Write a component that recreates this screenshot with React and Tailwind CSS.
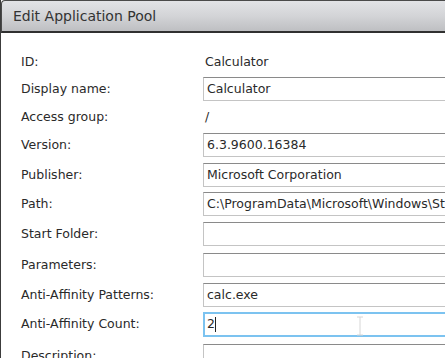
import React from 'react';

const rows = [
  { label: 'ID:', kind: 'text', value: 'Calculator', mt: 'mt-0' },
  { label: 'Display name:', kind: 'input', value: 'Calculator', mt: 'mt-[4px]' },
  { label: 'Access group:', kind: 'text', value: '/', mt: 'mt-[5px]' },
  { label: 'Version:', kind: 'input', value: '6.3.9600.16384', mt: 'mt-[5px]' },
  { label: 'Publisher:', kind: 'input', value: 'Microsoft Corporation', mt: 'mt-[6px]' },
  { label: 'Path:', kind: 'input', value: 'C:\\ProgramData\\Microsoft\\Windows\\Start Menu\\Programs', mt: 'mt-[5px]' },
  { label: 'Start Folder:', kind: 'input', value: '', mt: 'mt-[6px]' },
  { label: 'Parameters:', kind: 'input', value: '', mt: 'mt-[7px]' },
  { label: 'Anti-Affinity Patterns:', kind: 'input', value: 'calc.exe', mt: 'mt-[6px]' },
  { label: 'Anti-Affinity Count:', kind: 'focus', value: '2', mt: 'mt-[5px]' },
  { label: 'Description:', kind: 'input', value: '', mt: 'mt-[7px]' },
];

const Field = ({ row }) => {
  if (row.kind === 'text') {
    return <div className="h-[22px] flex items-center pl-[2px] whitespace-nowrap">{row.value}</div>;
  }
  if (row.kind === 'focus') {
    return (
      <div className="relative h-[25px] w-[300px] shrink-0 border-2 border-[#7cc3f0] bg-white flex items-center pl-[2px] whitespace-nowrap">
        <span>{row.value}</span>
        <span className="inline-block w-px h-[15px] bg-[#222]" />
        {/* mouse I-beam */}
        <svg className="absolute left-[151px] top-[2px]" width="8" height="20" viewBox="0 0 8 20">
          <path d="M1 1h6M4 1v18M1 19h6" stroke="#d6d6d6" strokeWidth="1" fill="none" />
        </svg>
      </div>
    );
  }
  return (
    <div className="h-[24px] w-[300px] shrink-0 border border-[#c4c4c4] border-t-[#8a8a8a] bg-white flex items-center pl-[3px] whitespace-nowrap overflow-hidden">
      {row.value}
    </div>
  );
};

const App = () => {
  return (
    <div className="w-[445px] h-[358px] overflow-hidden bg-white border-l border-[#3c3c3c] text-[12.5px] text-[#2a2a2a] font-['DejaVu_Sans',sans-serif]">
      {/* title bar */}
      <div className="h-[33px] rounded-tl-[4px] border-t border-l border-[#4a4a4a] border-b-2 border-b-[#303030] bg-gradient-to-b from-[#e2e3e6] via-[#d3d4d7] to-[#bebfc2] flex items-center pl-[11px]">
        <span className="text-[14px] text-[#333]">Edit Application Pool</span>
      </div>

      <div className="pt-[18px] pl-[20px] flex flex-col">
        {rows.map((row) => (
          <div key={row.label} className={`flex items-center ${row.mt}`}>
            <div className="w-[182px] shrink-0 whitespace-nowrap">{row.label}</div>
            <Field row={row} />
          </div>
        ))}
      </div>
    </div>
  );
};

export default App;
